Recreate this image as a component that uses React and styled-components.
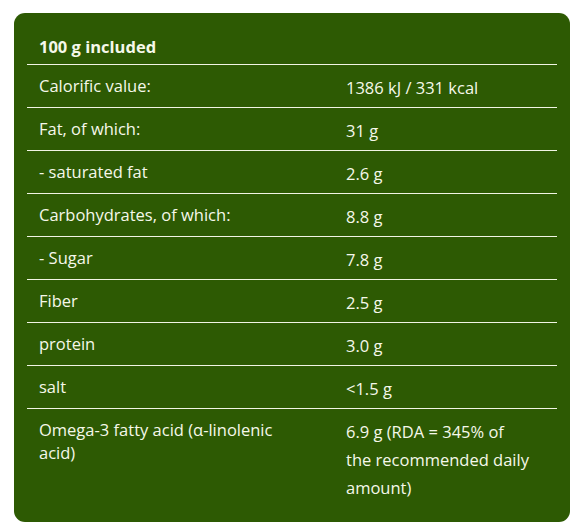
import React from 'react';
import styled, { createGlobalStyle } from 'styled-components';

const GlobalStyle = createGlobalStyle`
  html, body {
    margin: 0;
    padding: 0;
    background: #ffffff;
  }
  body {
    font-family: "Open Sans", "Noto Sans", sans-serif;
  }
`;

const Page = styled.div`
  width: 580px;
  height: 532px;
  padding: 13px 10px 10px 14px;
  box-sizing: border-box;
`;

const Panel = styled.div`
  width: 556px;
  background: #2d5a03;
  border-radius: 11px;
  padding: 0 13px 15px;
  box-sizing: border-box;
  color: #f5f8ea;
`;

const Header = styled.div`
  padding: 22px 12px 6px;
  font-size: 16.5px;
  font-weight: 700;
  line-height: 23px;
  border-bottom: 1px solid #f1f5e4;
`;

const Row = styled.div`
  display: grid;
  grid-template-columns: 319px 1fr;
  border-bottom: ${p => (p.$last ? 'none' : '1px solid #f1f5e4')};
`;

const Label = styled.div`
  padding: 9px 40px 9px 12px;
  font-size: 16.5px;
  line-height: 23px;
`;

const Value = styled.div`
  padding: 9px 25px 5px 0;
  font-size: 16.5px;
  line-height: 28px;
`;

const rows = [
  ['Calorific value:', '1386 kJ / 331 kcal'],
  ['Fat, of which:', '31 g'],
  ['- saturated fat', '2.6 g'],
  ['Carbohydrates, of which:', '8.8 g'],
  ['- Sugar', '7.8 g'],
  ['Fiber', '2.5 g'],
  ['protein', '3.0 g'],
  ['salt', '<1.5 g'],
  ['Omega-3 fatty acid (α-linolenic acid)', '6.9 g (RDA = 345% of the recommended daily amount)'],
];

export default function App() {
  return (
    <>
      <GlobalStyle />
      <Page>
        <Panel>
          <Header>100 g included</Header>
          {rows.map(([label, value], i) => (
            <Row key={label} $last={i === rows.length - 1}>
              <Label>{label}</Label>
              <Value>{value}</Value>
            </Row>
          ))}
        </Panel>
      </Page>
    </>
  );
}
